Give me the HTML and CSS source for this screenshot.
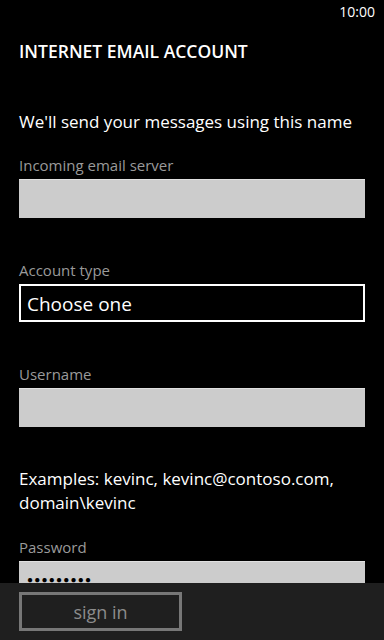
FILE: index.html
```html
<!DOCTYPE html>
<html lang="en">
<head>
  <meta charset="UTF-8">
  <meta name="viewport" content="width=device-width, initial-scale=1.0">
  <title>Internet Email Account</title>
  <link rel="stylesheet" href="styles.css">
</head>
<body>
  <div class="phone">
    <div class="status-bar">
      <span class="clock">10:00</span>
    </div>

    <div class="content">
      <h1 class="page-title">INTERNET EMAIL ACCOUNT</h1>

      <p class="intro">We'll send your messages using this name</p>

      <div class="field first">
        <label class="field-label">Incoming email server</label>
        <div class="textbox"></div>
      </div>

      <div class="field">
        <label class="field-label">Account type</label>
        <div class="picker">Choose one</div>
      </div>

      <div class="field">
        <label class="field-label">Username</label>
        <div class="textbox"></div>
      </div>

      <p class="hint">Examples: kevinc, kevinc@contoso.com, domain\kevinc</p>

      <div class="field after-hint">
        <label class="field-label">Password</label>
        <div class="textbox password">&#9679;&#9679;&#9679;&#9679;&#9679;&#9679;&#9679;&#9679;&#9679;</div>
      </div>
    </div>

    <div class="app-bar">
      <button class="app-button">sign in</button>
    </div>
  </div>
</body>
</html>
```

FILE: styles.css
```css
body {
  margin: 0;
  padding: 0;
  background: #000;
  font-family: 'Open Sans', 'Noto Sans', sans-serif;
  color: #fff;
}
.phone {
  width: 384px;
  height: 640px;
  display: flex;
  flex-direction: column;
  overflow: hidden;
}
.status-bar {
  height: 28px;
  display: flex;
  justify-content: flex-end;
  padding-right: 9px;
}
.clock {
  font-size: 14px;
  line-height: 24px;
  color: #fff;
}
.content {
  flex: 1;
  overflow: hidden;
  padding: 0 19px;
}
.page-title {
  margin: 11px 0 0;
  font-size: 17.5px;
  font-weight: 600;
  line-height: 24px;
}
.intro {
  margin: 47px 0 0;
  font-size: 17px;
  line-height: 24px;
}
.field {
  margin-top: 42px;
}
.field.first {
  margin-top: 21px;
}
.field.after-hint {
  margin-top: 22px;
}
.field-label {
  display: block;
  font-size: 15px;
  line-height: 20px;
  color: #9a9a9a;
  margin-bottom: 4px;
}
.textbox {
  height: 39px;
  background: #cccccc;
  border-top: 1px solid #e0e0e0;
  box-sizing: border-box;
}
.textbox.password {
  color: #000;
  font-size: 10px;
  letter-spacing: 1.2px;
  padding: 10px 0 0 8px;
}
.picker {
  height: 38px;
  box-sizing: border-box;
  border: 2px solid #fff;
  padding: 2px 0 0 6px;
  font-size: 19px;
  line-height: 32px;
}
.hint {
  margin: 40px 0 0;
  font-size: 17px;
  line-height: 24px;
}
.app-bar {
  height: 57px;
  flex-shrink: 0;
  background: #1f1f1f;
  padding: 9px 19px 0;
  box-sizing: border-box;
}
.app-button {
  width: 163px;
  height: 39px;
  background: transparent;
  border: 3px solid #777;
  color: #8c8c8c;
  font-family: 'Open Sans', 'Noto Sans', sans-serif;
  font-size: 18px;
  padding: 0;
  line-height: 30px;
}
```
